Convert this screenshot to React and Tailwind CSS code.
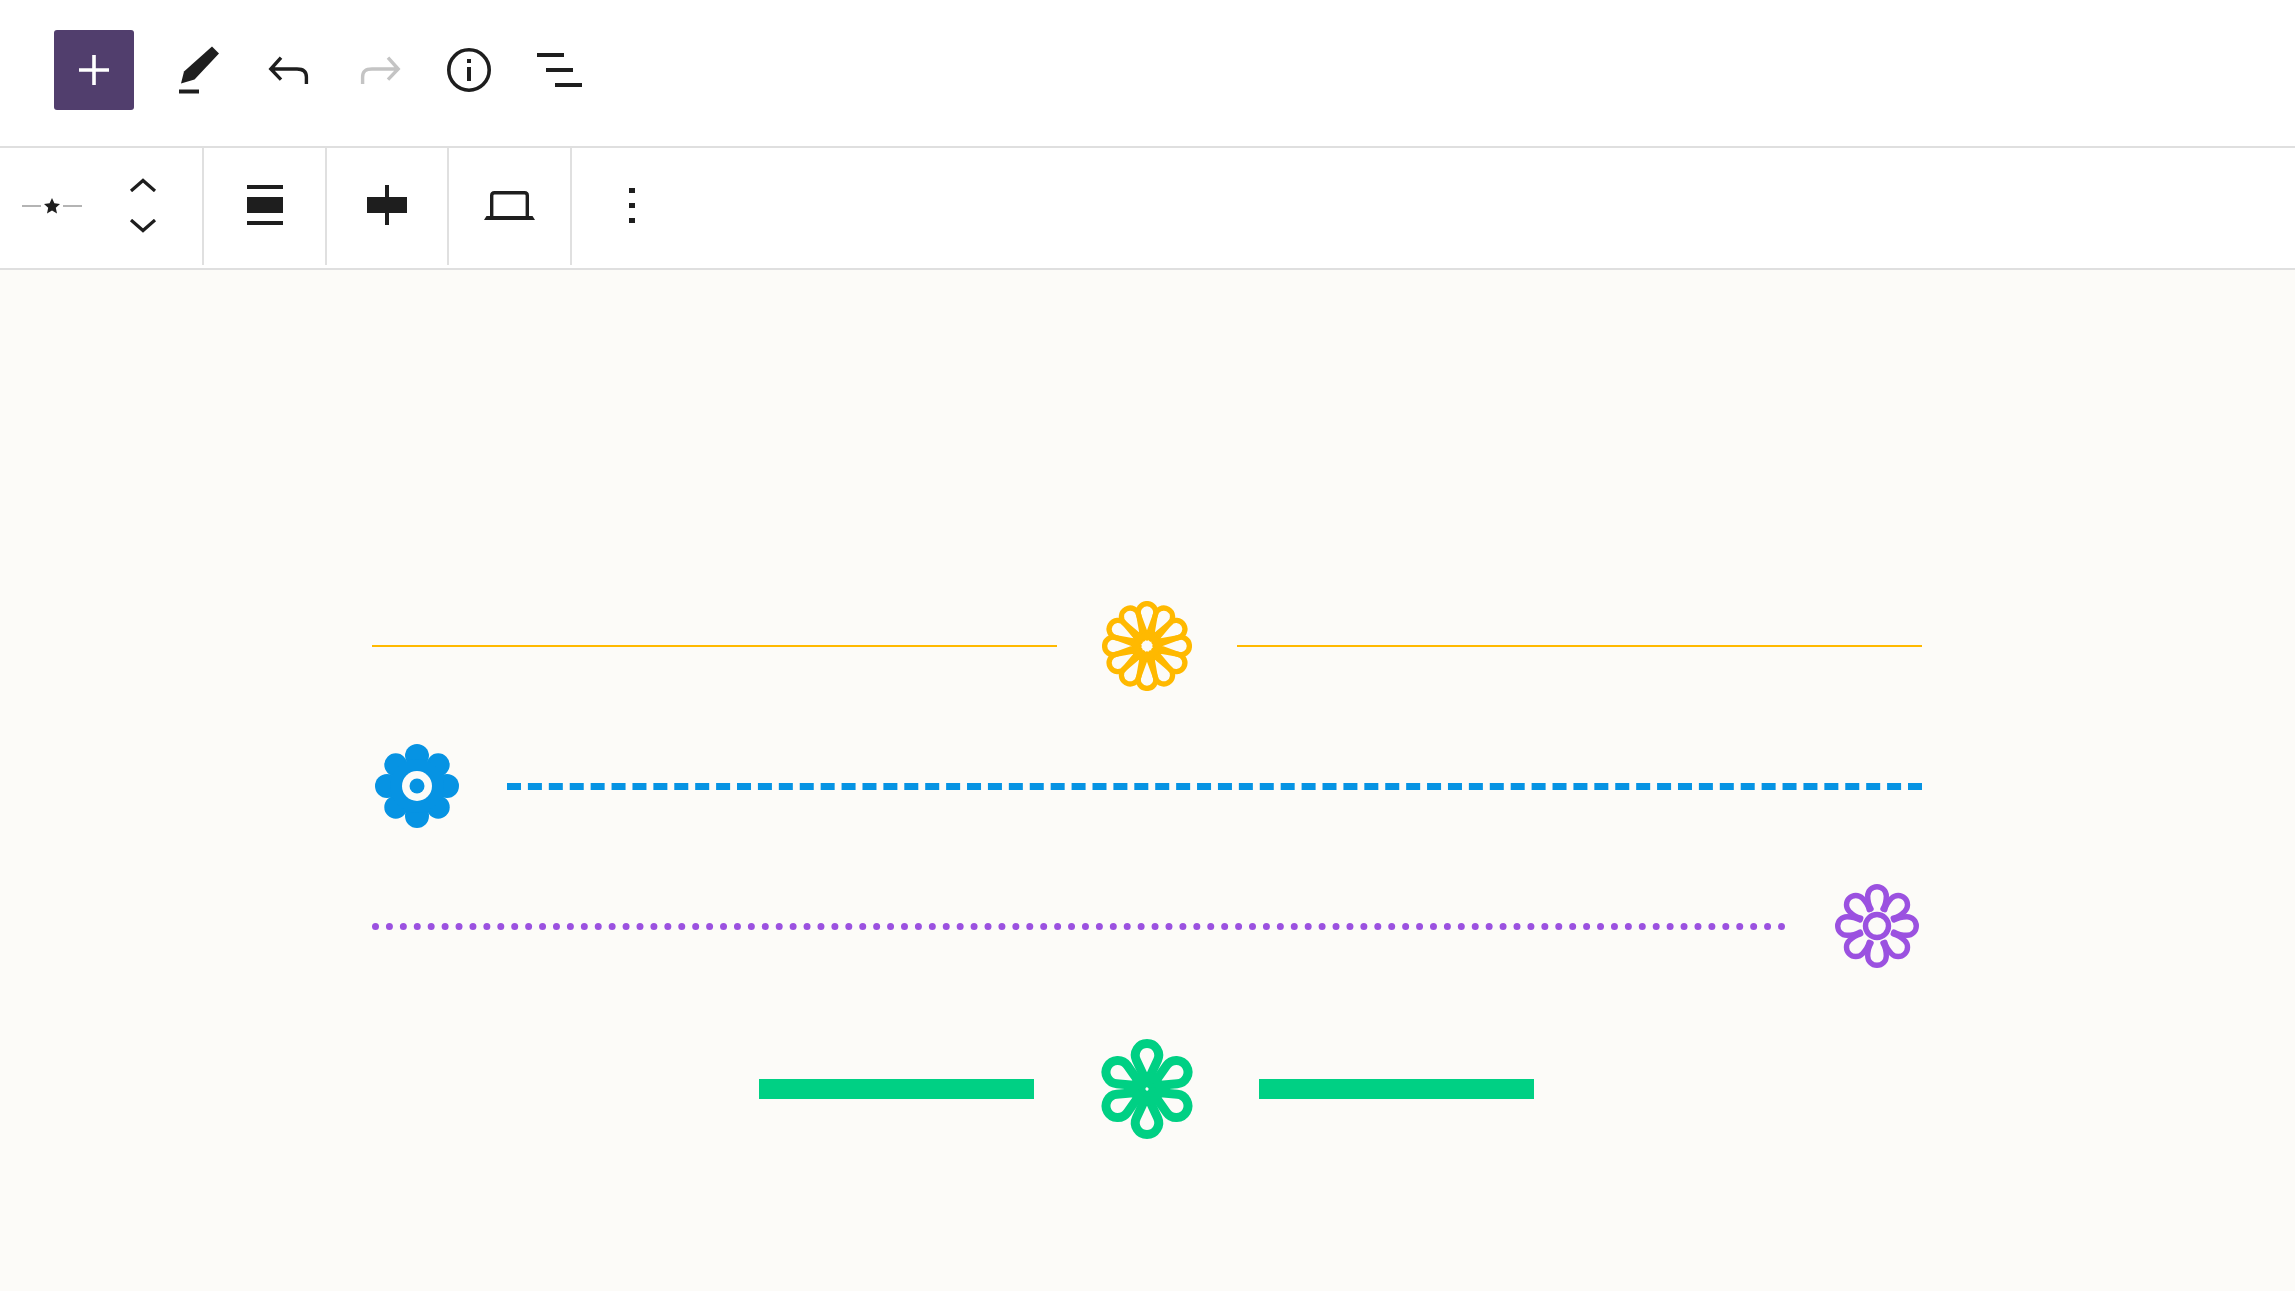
// petal closed at a point near the hub, round at the outer end
function teardrop(c, tipR, arcR, r) {
  const d = arcR - tipR;
  const sin = r / d;
  const cos = Math.sqrt(1 - sin * sin);
  const cy = c - arcR;
  return `M${c} ${c - tipR}L${c - r * cos} ${cy + r * sin}A${r} ${r} 0 1 1 ${c + r * cos} ${cy + r * sin}Z`;
}

function Flower({ size, count, petal, strokeWidth, className, children }) {
  const c = size / 2;
  const petals = [];
  for (let i = 0; i < count; i++) {
    petals.push(
      <path
        key={i}
        d={petal}
        transform={`rotate(${(360 / count) * i} ${c} ${c})`}
        fill="none"
        stroke="currentColor"
        strokeWidth={strokeWidth}
        strokeLinecap="round"
        strokeLinejoin="round"
      />
    );
  }
  return (
    <svg viewBox={`0 0 ${size} ${size}`} className={`shrink-0 ${className}`}>
      {petals}
      {children}
    </svg>
  );
}

function TopToolbar() {
  return (
    <div className="h-[148px] bg-white border-b-2 border-[#dfdfdf] flex items-center pl-[54px] pb-[6px] shrink-0">
      <button className="w-[80px] h-[80px] rounded-[3px] bg-[#513e6d] flex items-center justify-center">
        <svg viewBox="0 0 30 30" className="w-[30px] h-[30px]" fill="#fff">
          <path d="M13.200 0h3.600v13.200H30v3.600H16.800V30h-3.600V16.800H0v-3.600h13.200z" />
        </svg>
      </button>
      <svg viewBox="0 0 48 48" className="w-[48px] h-[48px] ml-[41px] text-[#1e1e1e]" fill="currentColor">
        <path d="M37 .5 44 7.500 19.500 33.500 6 37.500 9 25.500z" />
        <path d="M4 43.500h20v4H4z" />
      </svg>
      <svg viewBox="0 0 24 24" className="w-[48px] h-[48px] ml-[42px] text-[#1e1e1e]" fill="none" stroke="currentColor" strokeWidth="1.7">
        <path d="M8 5.800 2.900 11.500 8 16.800M3 11.500h13c3 0 4.700 1 4.700 4v3.500" />
      </svg>
      <svg viewBox="0 0 24 24" className="w-[48px] h-[48px] ml-[43px] text-[#c4c4c4]" fill="none" stroke="currentColor" strokeWidth="1.7">
        <path d="M16 5.800 21.100 11.500 16 16.800M21 11.500H8c-3 0-4.700 1-4.700 4v3.500" />
      </svg>
      <svg viewBox="0 0 24 24" className="w-[48px] h-[48px] ml-[41px] text-[#1e1e1e]" fill="none" stroke="currentColor" strokeWidth="1.8">
        <circle cx="12" cy="12" r="10.100" />
        <path d="M12 10.500v7" strokeWidth="2" />
        <path d="M12 6.500v2" strokeWidth="2" />
      </svg>
      <svg viewBox="0 0 48 48" className="w-[48px] h-[48px] ml-[42px] text-[#1e1e1e]" fill="currentColor">
        <path d="M2 7h27v4H2zM11 22h27v4H11zM20 37h27v4H20z" />
      </svg>
    </div>
  );
}

function BlockToolbar() {
  return (
    <div className="h-[122px] bg-white border-b-2 border-[#dfdfdf] flex items-stretch shrink-0 text-[#1e1e1e]">
      <div className="w-[204px] border-r-2 border-[#e0e0e0] mb-[3px] pb-[2px] flex items-center">
        <svg viewBox="0 0 60 16" className="w-[60px] h-[16px] ml-[22px]">
          <path d="M0 8h19M41 8h19" stroke="#b4b4b4" strokeWidth="2" />
          <path d="m30 0 2.400 5.300 5.600.6-4.200 3.800 1.200 5.800-5-3-5 3 1.200-5.800L22 5.900l5.600-.6z" fill="#1e1e1e" />
        </svg>
        <div className="ml-[47px] flex flex-col gap-[27px]">
          <svg viewBox="0 0 28 14" className="w-[28px] h-[14px]" fill="none" stroke="currentColor" strokeWidth="3.200">
            <path d="M2 13 14 2.500 26 13" />
          </svg>
          <svg viewBox="0 0 28 14" className="w-[28px] h-[14px]" fill="none" stroke="currentColor" strokeWidth="3.200">
            <path d="M2 1 14 11.500 26 1" />
          </svg>
        </div>
      </div>
      <div className="w-[123px] border-r-2 border-[#e0e0e0] mb-[3px] pb-[3px] flex items-center justify-center">
        <div className="w-[36px] flex flex-col gap-[8px]">
          <div className="h-[4px] bg-[#1e1e1e]" />
          <div className="h-[16px] bg-[#1e1e1e]" />
          <div className="h-[4px] bg-[#1e1e1e]" />
        </div>
      </div>
      <div className="w-[122px] border-r-2 border-[#e0e0e0] mb-[3px] pb-[3px] flex items-center justify-center">
        <svg viewBox="0 0 40 40" className="w-[40px] h-[40px]" fill="currentColor">
          <path d="M18 0h4v12h18v16H22v12h-4V28H0V12h18z" />
        </svg>
      </div>
      <div className="w-[123px] border-r-2 border-[#e0e0e0] mb-[3px] pb-[3px] flex items-center justify-center">
        <svg viewBox="0 0 51 29" className="w-[51px] h-[29px]" fill="none" stroke="currentColor">
          <path d="M7.700 26V4.500q0-2.800 2.800-2.800h30q2.800 0 2.800 2.800V26" strokeWidth="3.400" />
          <path d="M2.500 25H48.500L51 29H0z" fill="currentColor" stroke="none" />
        </svg>
      </div>
      <div className="w-[120px] flex flex-col items-center justify-center gap-[9.500px] pb-[5px]">
        <div className="w-[5.500px] h-[5.500px] bg-[#1e1e1e]" />
        <div className="w-[5.500px] h-[5.500px] bg-[#1e1e1e]" />
        <div className="w-[5.500px] h-[5.500px] bg-[#1e1e1e]" />
      </div>
    </div>
  );
}

function Canvas() {
  return (
    <div className="flex-1 bg-[#fcfbf8] flex flex-col pl-[372px] pr-[373px] pt-[331px]">
      {/* yellow */}
      <div className="flex items-center h-[90px]">
        <div className="w-[685px] h-[2px] bg-[#ffb900]" />
        <Flower
          size={90}
          count={12}
          petal={teardrop(45, 8, 33.6, 8.8)}
          strokeWidth={5.3}
          className="w-[90px] h-[90px] mx-[45px] text-[#ffb900]"
        >
          <circle cx="45" cy="45" r="10.600" fill="none" stroke="currentColor" strokeWidth="5.300" />
        </Flower>
        <div className="flex-1 h-[2px] bg-[#ffb900]" />
      </div>
      {/* blue */}
      <div className="flex items-center h-[84px] mt-[53px]">
        <svg viewBox="0 0 84 84" className="w-[84px] h-[84px] ml-[3px] shrink-0 text-[#0693e3]" fill="currentColor">
          {[0, 45, 90, 135, 180, 225, 270, 315].map((a) => (
            <circle key={a} cx="42" cy="12" r={a % 90 === 0 ? 12 : 11.5} transform={`rotate(${a} 42 42)`} />
          ))}
          <circle cx="42" cy="42" r="27" />
          <circle cx="42" cy="42" r="15" fill="#fcfbf8" />
          <circle cx="42" cy="42" r="7.500" />
        </svg>
        <div className="flex-1 ml-[48px] border-t-[7px] border-dashed border-[#0693e3]" />
      </div>
      {/* purple */}
      <div className="flex items-center h-[84px] mt-[56px]">
        <div className="flex-1 border-t-[7px] border-dotted border-[#9b51e0]" />
        <Flower
          size={84}
          count={8}
          petal="M36 25C33 20 32.700 16 32.700 12A9.300 9.300 0 0 1 51.300 12C51.300 16 51 20 48 25"
          strokeWidth={5.4}
          className="w-[84px] h-[84px] ml-[49px] mr-[3px] text-[#9b51e0]"
        >
          <circle cx="42" cy="42" r="11.500" fill="none" stroke="currentColor" strokeWidth="5.400" />
        </Flower>
      </div>
      {/* green */}
      <div className="flex items-center h-[100px] mt-[71px] ml-[387px]">
        <div className="w-[275px] h-[20px] bg-[#00d084]" />
        <Flower
          size={100}
          count={6}
          petal={teardrop(50, 6, 33.8, 11.7)}
          strokeWidth={9}
          className="w-[100px] h-[100px] mx-[62.500px] text-[#00d084]"
        >
          <circle cx="50" cy="50" r="12.500" fill="none" stroke="currentColor" strokeWidth="8.400" />
        </Flower>
        <div className="w-[275px] h-[20px] bg-[#00d084]" />
      </div>
    </div>
  );
}

export default function App() {
  return (
    <div className="w-[2295px] h-[1291px] flex flex-col overflow-hidden">
      <TopToolbar />
      <BlockToolbar />
      <Canvas />
    </div>
  );
}
